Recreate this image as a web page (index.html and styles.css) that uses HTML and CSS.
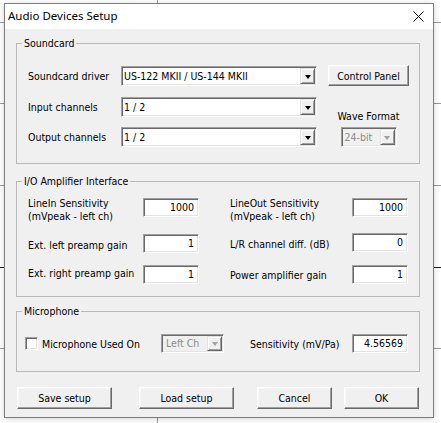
FILE: index.html
```html
<!DOCTYPE html>
<html>
<head>
<meta charset="utf-8">
<link rel="stylesheet" href="styles.css">
</head>
<body>
<div class="dialog">
  <div class="titlebar">
    <span class="title">Audio Devices Setup</span>
    <svg class="close" width="11" height="11" viewBox="0 0 11 11"><path d="M0.5 0.5L10.5 10.5M10.5 0.5L0.5 10.5" stroke="#000" stroke-width="1" fill="none"/></svg>
  </div>
  <div class="content">
    <div class="group g-sound">
      <span class="legend">Soundcard</span>
      <div class="sound-grid">
        <span class="lbl">Soundcard driver</span>
        <div class="combo"><span class="combo-text">US-122 MKII / US-144 MKII</span><span class="combo-btn"><span class="arrow"></span></span></div>
        <button class="btn btn-cp">Control Panel</button>
        <span class="lbl">Input channels</span>
        <div class="combo"><span class="combo-text">1 / 2</span><span class="combo-btn"><span class="arrow"></span></span></div>
        <div class="wave">
          <span class="wave-lbl">Wave Format</span>
          <div class="combo combo-dis combo-wave"><span class="combo-text">24-bit</span><span class="combo-btn"><span class="arrow"></span></span></div>
        </div>
        <span class="lbl">Output channels</span>
        <div class="combo"><span class="combo-text">1 / 2</span><span class="combo-btn"><span class="arrow"></span></span></div>
      </div>
    </div>

    <div class="group g-io">
      <span class="legend">I/O Amplifier Interface</span>
      <div class="io-grid">
        <span class="io-lbl r1">LineIn Sensitivity<br>(mVpeak - left ch)</span>
        <div class="edit">1000</div>
        <span class="io-lbl r1 right">LineOut Sensitivity<br>(mVpeak - left ch)</span>
        <div class="edit">1000</div>

        <span class="io-lbl r2">Ext. left preamp gain</span>
        <div class="edit">1</div>
        <span class="io-lbl r2 right r2r">L/R channel diff. (dB)</span>
        <div class="edit e-up">0</div>

        <span class="io-lbl r3">Ext. right preamp gain</span>
        <div class="edit">1</div>
        <span class="io-lbl r3 right r3r">Power amplifier gain</span>
        <div class="edit">1</div>
      </div>
    </div>

    <div class="group g-mic">
      <span class="legend">Microphone</span>
      <div class="mic-row">
        <span class="check"></span>
        <span class="mic-lbl">Microphone Used On</span>
        <div class="combo combo-dis combo-mic"><span class="combo-text">Left Ch</span><span class="combo-btn"><span class="arrow"></span></span></div>
        <span class="sens-lbl">Sensitivity (mV/Pa)</span>
        <div class="edit">4.56569</div>
      </div>
    </div>

    <div class="btns">
      <button class="btn b-save">Save setup</button>
      <button class="btn b-load">Load setup</button>
      <button class="btn b-cancel">Cancel</button>
      <button class="btn b-ok">OK</button>
    </div>
  </div>
</div>
</body>
</html>
```

FILE: styles.css
```css
html, body {
  margin: 0;
  height: 100%;
}
body {
  padding: 3px 0 0 4px;
  box-sizing: border-box;
  background-color: #ffffff;
  background-image:
    linear-gradient(#9a9a9a, #9a9a9a),
    linear-gradient(#9a9a9a, #9a9a9a),
    linear-gradient(#9a9a9a, #9a9a9a),
    linear-gradient(#1a1a1a, #1a1a1a),
    linear-gradient(#9a9a9a, #9a9a9a),
    linear-gradient(#9a9a9a, #9a9a9a);
  background-size: 100% 1px, 100% 1px, 100% 1px, 100% 1px, 100% 1px, 1px 100%;
  background-position: 0 22px, 0 103px, 0 185px, 0 267px, 0 348px, 157px 0;
  background-repeat: no-repeat;
  font-family: "DejaVu Sans Condensed", "DejaVu Sans", sans-serif;
  font-stretch: semi-condensed;
  font-size: 10.5px;
  color: #000;
}

.dialog {
  width: 430px;
  height: 415px;
  box-sizing: border-box;
  border: 1px solid #7e7e7e;
  background: #f0f0f0;
  display: flex;
  flex-direction: column;
  box-shadow: 0 1px 6px rgba(0, 0, 0, 0.18);
}

.titlebar {
  height: 25px;
  flex: none;
  background: #ffffff;
  display: flex;
  align-items: center;
  padding-left: 3px;
}
.title {
  font-family: "Noto Sans", "Open Sans", sans-serif;
  font-stretch: normal;
  font-size: 11.5px;
  line-height: 16px;
  margin-top: -1px;
}
.close {
  margin-left: auto;
  margin-right: 9px;
  margin-top: -1px;
}

.content {
  padding: 14px 0 0 11px;
}

.group {
  position: relative;
  width: 404px;
  box-sizing: border-box;
  border: 1px solid #b9b9b9;
}
.legend {
  position: absolute;
  top: -7px;
  left: 5px;
  padding: 0 2px;
  line-height: 13px;
  background: #f0f0f0;
}

.btn {
  height: 22px;
  box-sizing: border-box;
  padding: 0;
  margin: 0;
  background: #f0f0f0;
  border: 1px solid;
  border-color: #ffffff #696969 #696969 #ffffff;
  box-shadow: inset -1px -1px #a0a0a0, inset 1px 1px #f7f7f7;
  font: inherit;
  color: #000;
  text-align: center;
  line-height: 18px;
}

.g-sound {
  height: 121px;
  padding: 22px 0 0 11px;
}
.sound-grid {
  display: grid;
  grid-template-columns: 93px 196px 92px;
  grid-template-rows: 20px 31px 30px;
  align-items: end;
}
.lbl {
  height: 20px;
  display: flex;
  align-items: center;
  white-space: nowrap;
}
.btn.btn-cp {
  width: 81px;
  height: 21px;
  margin-left: 11px;
}
.wave {
  grid-column: 3;
  grid-row: 2 / 4;
  align-self: stretch;
  padding-left: 11px;
  display: flex;
  flex-direction: column;
  align-items: center;
  justify-content: flex-end;
  gap: 4px;
}
.wave-lbl {
  line-height: 13px;
  white-space: nowrap;
}

.combo {
  display: flex;
  height: 20px;
  box-sizing: border-box;
  padding: 1px;
  background: #ffffff;
  border: 1px solid;
  border-color: #a0a0a0 #ffffff #ffffff #a0a0a0;
  box-shadow: inset 1px 1px #696969, inset -1px -1px #e3e3e3;
}
.combo-text {
  flex: 1;
  padding-left: 1px;
  line-height: 16px;
  white-space: nowrap;
  overflow: hidden;
}
.combo-btn {
  flex: none;
  width: 15px;
  box-sizing: border-box;
  background: #f0f0f0;
  border: 1px solid;
  border-color: #e3e3e3 #696969 #696969 #e3e3e3;
  box-shadow: inset 1px 1px #ffffff, inset -1px -1px #a0a0a0;
  display: flex;
  align-items: center;
  justify-content: center;
}
.arrow {
  width: 0;
  height: 0;
  border-left: 3.5px solid transparent;
  border-right: 3.5px solid transparent;
  border-top: 4px solid #000;
  margin-top: 1px;
}
.combo-dis {
  background: #f0f0f0;
  color: #8d8d8d;
}
.combo-dis .arrow {
  border-top-color: #a0a0a0;
}
.combo-wave {
  width: 56px;
}
.combo-wave .combo-text {
  padding-left: 2px;
}
.combo-mic {
  width: 63px;
  height: 19px;
}
.combo-mic .combo-text {
  padding-left: 3px;
  line-height: 15px;
}

.edit {
  width: 56px;
  height: 19px;
  box-sizing: border-box;
  background: #ffffff;
  border: 1px solid;
  border-color: #a0a0a0 #ffffff #ffffff #a0a0a0;
  box-shadow: inset 1px 1px #696969, inset -1px -1px #e3e3e3;
  text-align: right;
  padding-right: 4px;
  line-height: 16px;
}

.g-io {
  margin-top: 17px;
  height: 116px;
  padding: 16px 0 0 11px;
}
.io-grid {
  display: grid;
  grid-template-columns: 115px 56px 153px 56px;
  grid-template-rows: 19px 36px 31px;
  align-items: end;
}
.io-lbl {
  line-height: 13px;
  white-space: nowrap;
}
.io-lbl.right {
  padding-left: 31px;
}
.io-lbl.r1 {
  align-self: start;
  margin-top: -1.5px;
}
.io-lbl.r2 {
  margin-bottom: 1px;
}
.io-lbl.r2r {
  margin-bottom: 2px;
}
.io-lbl.r3 {
  margin-bottom: 4px;
}
.io-lbl.r3r {
  margin-bottom: 2px;
}
.e-up {
  margin-bottom: 1px;
}

.g-mic {
  margin-top: 14px;
  height: 61px;
  padding: 22px 0 0 8px;
}
.mic-row {
  display: flex;
  align-items: center;
  height: 19px;
}
.check {
  flex: none;
  width: 13px;
  height: 13px;
  box-sizing: border-box;
  background: #ffffff;
  border: 1px solid;
  border-color: #a0a0a0 #ffffff #ffffff #a0a0a0;
  box-shadow: inset 1px 1px #696969, inset -1px -1px #e3e3e3;
}
.mic-lbl {
  width: 119px;
  margin-left: 4px;
  white-space: nowrap;
}
.sens-lbl {
  width: 102px;
  margin-left: 26px;
  white-space: nowrap;
}

.btns {
  display: flex;
  margin-top: 15px;
  padding-left: 1px;
  height: 22px;
}
.b-save { width: 95px; }
.b-load { width: 95px; margin-left: 27px; }
.b-cancel { width: 75px; margin-left: 23px; }
.b-ok { width: 75px; margin-left: 12px; }
```
